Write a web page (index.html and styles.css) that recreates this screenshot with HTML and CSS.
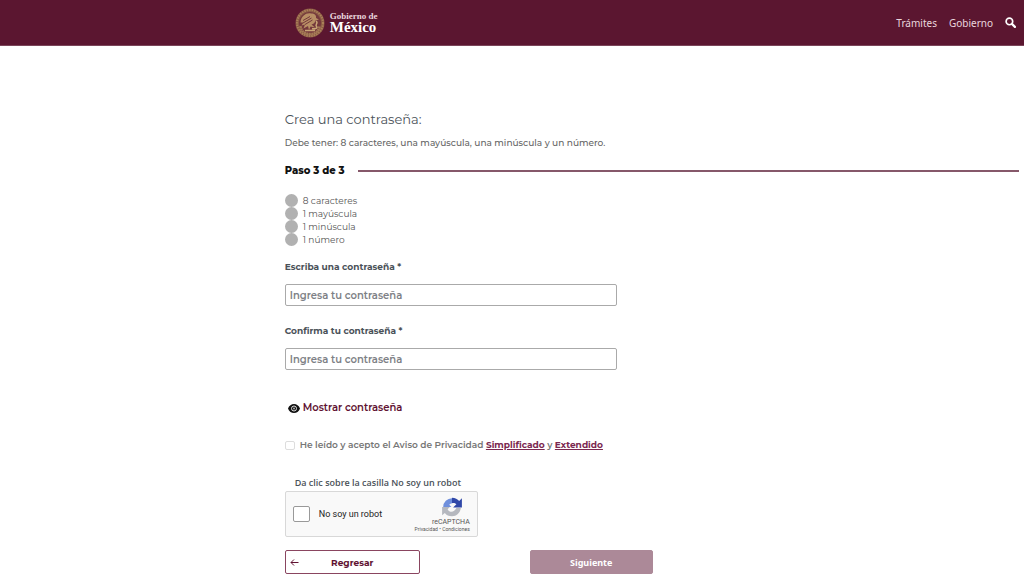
FILE: index.html
```html
<!DOCTYPE html>
<html lang="es">
<head>
    <meta charset="UTF-8">
    <meta name="viewport" content="width=device-width, initial-scale=1.0">
    <title>Crea una contraseña</title>
    <link rel="stylesheet" href="styles.css">
</head>
<body>
    <header class="topbar">
        <a class="brand" href="#">
            <svg class="seal" viewBox="0 0 60 60" aria-hidden="true">
                <circle cx="30" cy="30" r="29" fill="#8a5a45"/>
                <circle cx="30" cy="30" r="26" fill="none" stroke="#ab8058" stroke-width="4" stroke-dasharray="3 2"/>
                <circle cx="30" cy="30" r="22" fill="#74383c"/>
                <path d="M11 36c1 10 8 16 19 16s18-6 19-16" fill="none" stroke="#a47a55" stroke-width="5" stroke-dasharray="4 1"/>
                <path d="M11 29c1-13 11-20 21-18 8 0 11 4 10 9l6 3-7 2c-1 5-4 7-8 8l7 6-9-2-3 7-2-8-9 5 3-8-7 2 4-6z" fill="#b88f65"/>
                <path d="M16 25l14-8M16 30l17-10M20 33l15-9" stroke="#74383c" stroke-width="2"/>
                <path d="M42 26c6 4-3 7 1 11s-5 5-9 4M20 45h20" fill="none" stroke="#c9a576" stroke-width="3"/>
            </svg>
            <span class="brand-text">
                <span class="brand-small">Gobierno de</span>
                <span class="brand-big">México</span>
            </span>
        </a>
        <nav class="menu">
            <a href="#">Trámites</a>
            <a href="#">Gobierno</a>
            <button class="search" type="button" aria-label="Buscar">
                <svg viewBox="0 0 20 20" aria-hidden="true">
                    <circle cx="8" cy="8" r="6" fill="none" stroke="#fff" stroke-width="3"/>
                    <path d="M13 13L18 18" stroke="#fff" stroke-width="4" stroke-linecap="round"/>
                </svg>
            </button>
        </nav>
    </header>

    <main class="content">
        <h1>Crea una contraseña:</h1>
        <p class="hint">Debe tener: 8 caracteres, una mayúscula, una minúscula y un número.</p>
        <div class="step">
            <strong>Paso 3 de 3</strong>
            <span class="step-line"></span>
        </div>
        <ul class="rules">
            <li>8 caracteres</li>
            <li>1 mayúscula</li>
            <li>1 minúscula</li>
            <li>1 número</li>
        </ul>

        <form>
            <div class="form-group">
                <label for="password">Escriba una contraseña *</label>
                <input type="password" id="password" name="password" placeholder="Ingresa tu contraseña">
            </div>
            <div class="form-group">
                <label for="confirm">Confirma tu contraseña *</label>
                <input type="password" id="confirm" name="confirm" placeholder="Ingresa tu contraseña">
            </div>

            <button class="show-password" type="button">
                <svg viewBox="0 0 24 18" aria-hidden="true">
                    <path d="M0 9C2 3 7 0 12 0s10 3 12 9c-2 6-7 9-12 9S2 15 0 9z" fill="#111"/>
                    <circle cx="12" cy="9" r="5" fill="none" stroke="#ddd" stroke-width="2"/>
                    <circle cx="12" cy="9" r="2" fill="#aaa"/>
                </svg>
                Mostrar contraseña
            </button>

            <div class="privacy">
                <input type="checkbox" id="privacy" name="privacy">
                <span><label for="privacy">He leído y acepto el Aviso de Privacidad</label> <a href="#">Simplificado</a> y <a href="#">Extendido</a></span>
            </div>

            <p class="captcha-title">Da clic sobre la casilla No soy un robot</p>
            <div class="captcha">
                <input type="checkbox" id="robot" name="robot">
                <label for="robot">No soy un robot</label>
                <div class="captcha-brand">
                    <svg viewBox="0 0 40 40" aria-hidden="true">
                        <path d="M4 20A16 16 0 0 1 20 4v9a7 7 0 0 0-5 3l4 4z" fill="#6f8fdc"/>
                        <path d="M20 3c6 0 10 3 13 6l5-5v17H22l6-6c-2-2-5-3-8-2z" fill="#3048a8"/>
                        <path d="M2 20h14l-4 4c4 7 12 6 16-2h8c-1 9-8 15-16 15-6 0-10-2-13-6l-5 4z" fill="#b5b8bf"/>
                    </svg>
                    <span class="captcha-name">reCAPTCHA</span>
                    <span class="captcha-links"><a href="#">Privacidad</a> • <a href="#">Condiciones</a></span>
                </div>
            </div>

            <div class="button-group">
                <button class="btn btn-back" type="button">
                    <svg viewBox="0 0 18 14" aria-hidden="true">
                        <path d="M17 7H2M8 1L2 7l6 6" fill="none" stroke="#611232" stroke-width="2"/>
                    </svg>
                    <span>Regresar</span>
                </button>
                <button class="btn btn-next" type="submit">Siguiente</button>
            </div>
        </form>
    </main>
</body>
</html>
```
FILE: styles.css
```css
* {
    box-sizing: border-box;
}
body {
    margin: 0;
    background-color: #fff;
    color: #4b5259;
    font-family: Montserrat, Inter, sans-serif;
    font-size: 9px;
    line-height: 16px;
}
h1, p, ul {
    margin: 0;
    font-weight: normal;
}
button, input {
    font-family: inherit;
    font-size: inherit;
}
button {
    cursor: pointer;
}
.topbar {
    display: flex;
    align-items: center;
    justify-content: space-between;
    height: 46px;
    padding: 0 8px 0 calc(28% + 8px);
    background-color: #5b1630;
    border-bottom: 1px solid #7b4559;
}
.brand {
    display: flex;
    align-items: center;
    gap: 5px;
    color: #fff;
    text-decoration: none;
}
.seal {
    width: 30px;
    height: 30px;
}
.brand-text {
    display: flex;
    flex-direction: column;
    font-family: "Liberation Serif", serif;
    font-weight: bold;
}
.brand-small {
    font-size: 9px;
    line-height: 8px;
    color: #ead6de;
}
.brand-big {
    font-size: 15px;
    line-height: 14px;
}
.menu {
    display: flex;
    align-items: center;
    gap: 12px;
    font-family: "Noto Sans", sans-serif;
    font-size: 10px;
}
.menu a {
    color: #ead6de;
    text-decoration: none;
}
.search {
    display: flex;
    padding: 0;
    border: none;
    background: none;
}
.search svg {
    width: 11px;
    height: 11px;
}
.content {
    padding: 63px 5px 2px 28%;
    margin-left: -2px;
}
h1 {
    font-size: 13px;
    line-height: 20px;
}
.hint {
    margin-top: 6px;
    color: #666;
    font-weight: 500;
}
.step {
    display: flex;
    align-items: center;
    gap: 13px;
    margin-top: 11px;
    color: #111;
    font-size: 10px;
    line-height: 18px;
}
.step strong {
    font-weight: 800;
}
.step-line {
    flex: 1;
    height: 2px;
    background-color: #86586a;
}
.rules {
    margin-top: 14px;
    padding: 0;
    list-style: none;
    line-height: 13px;
    color: #555;
}
.rules li {
    display: flex;
    align-items: center;
    gap: 5px;
}
.rules li::before {
    content: "";
    width: 13px;
    height: 13px;
    border-radius: 50%;
    background-color: #b1b1b1;
}
.form-group {
    max-width: 332px;
    margin-top: 13px;
}
.form-group + .form-group {
    margin-top: 17px;
}
.form-group label {
    display: block;
    font-weight: bold;
}
.form-group input {
    display: block;
    width: 100%;
    height: 22px;
    margin-top: 9px;
    padding: 0 4px;
    border: 1px solid #aaa;
    border-radius: 2px;
    font-size: 10px;
    font-weight: 600;
}
.form-group input::placeholder {
    color: #7e8186;
}
.show-password {
    display: flex;
    align-items: center;
    gap: 3px;
    margin-top: 30px;
    padding: 0 0 0 3px;
    border: none;
    background: none;
    color: #611232;
    font-size: 10px;
    font-weight: 600;
    line-height: 16px;
}
.show-password svg {
    width: 12px;
    height: 9px;
}
.privacy {
    display: flex;
    align-items: center;
    gap: 5px;
    margin-top: 21px;
    color: #777;
    font-weight: 600;
}
.privacy a {
    color: #7b2850;
    font-weight: bold;
}
.privacy input, .captcha input {
    appearance: none;
    margin: 0;
    background-color: #fff;
}
.privacy input {
    width: 10px;
    height: 9px;
    border: 1px solid #ddd;
    border-radius: 2px;
}
.captcha-title {
    margin-top: 22px;
    padding-left: 10px;
    font-family: "Open Sans", sans-serif;
    font-weight: 600;
}
.captcha {
    display: flex;
    align-items: center;
    max-width: 193px;
    height: 46px;
    padding: 0 7px;
    border: 1px solid #d8d8d8;
    border-radius: 2px;
    background-color: #f9f9f9;
    color: #222;
    font-family: Roboto, sans-serif;
}
.captcha input {
    width: 17px;
    height: 16px;
    margin-right: 9px;
    border: 1px solid #999;
    border-radius: 2px;
}
.captcha-brand {
    display: flex;
    flex-direction: column;
    align-items: flex-end;
    margin-left: auto;
    color: #555;
}
.captcha-brand svg {
    width: 22px;
    height: 22px;
    margin-right: 7px;
}
.captcha-name {
    font-size: 7px;
    line-height: 8px;
}
.captcha-links {
    font-size: 5px;
    line-height: 7px;
}
.captcha-links a {
    color: inherit;
    text-decoration: none;
}
.button-group {
    display: flex;
    gap: 110px;
    margin-top: 13px;
}
.btn {
    height: 24px;
    border: 1px solid #8a4560;
    border-radius: 2px;
    font-weight: bold;
}
.btn-back {
    display: flex;
    align-items: center;
    width: 135px;
    padding: 0 13px 0 4px;
    background-color: #fff;
    color: #611232;
}
.btn-back svg {
    width: 9px;
    height: 7px;
}
.btn-back span {
    flex: 1;
}
.btn-next {
    width: 123px;
    border-color: #ac8998;
    background-color: #ac8998;
    color: #fff;
    font-family: "Noto Sans", sans-serif;
}
```
